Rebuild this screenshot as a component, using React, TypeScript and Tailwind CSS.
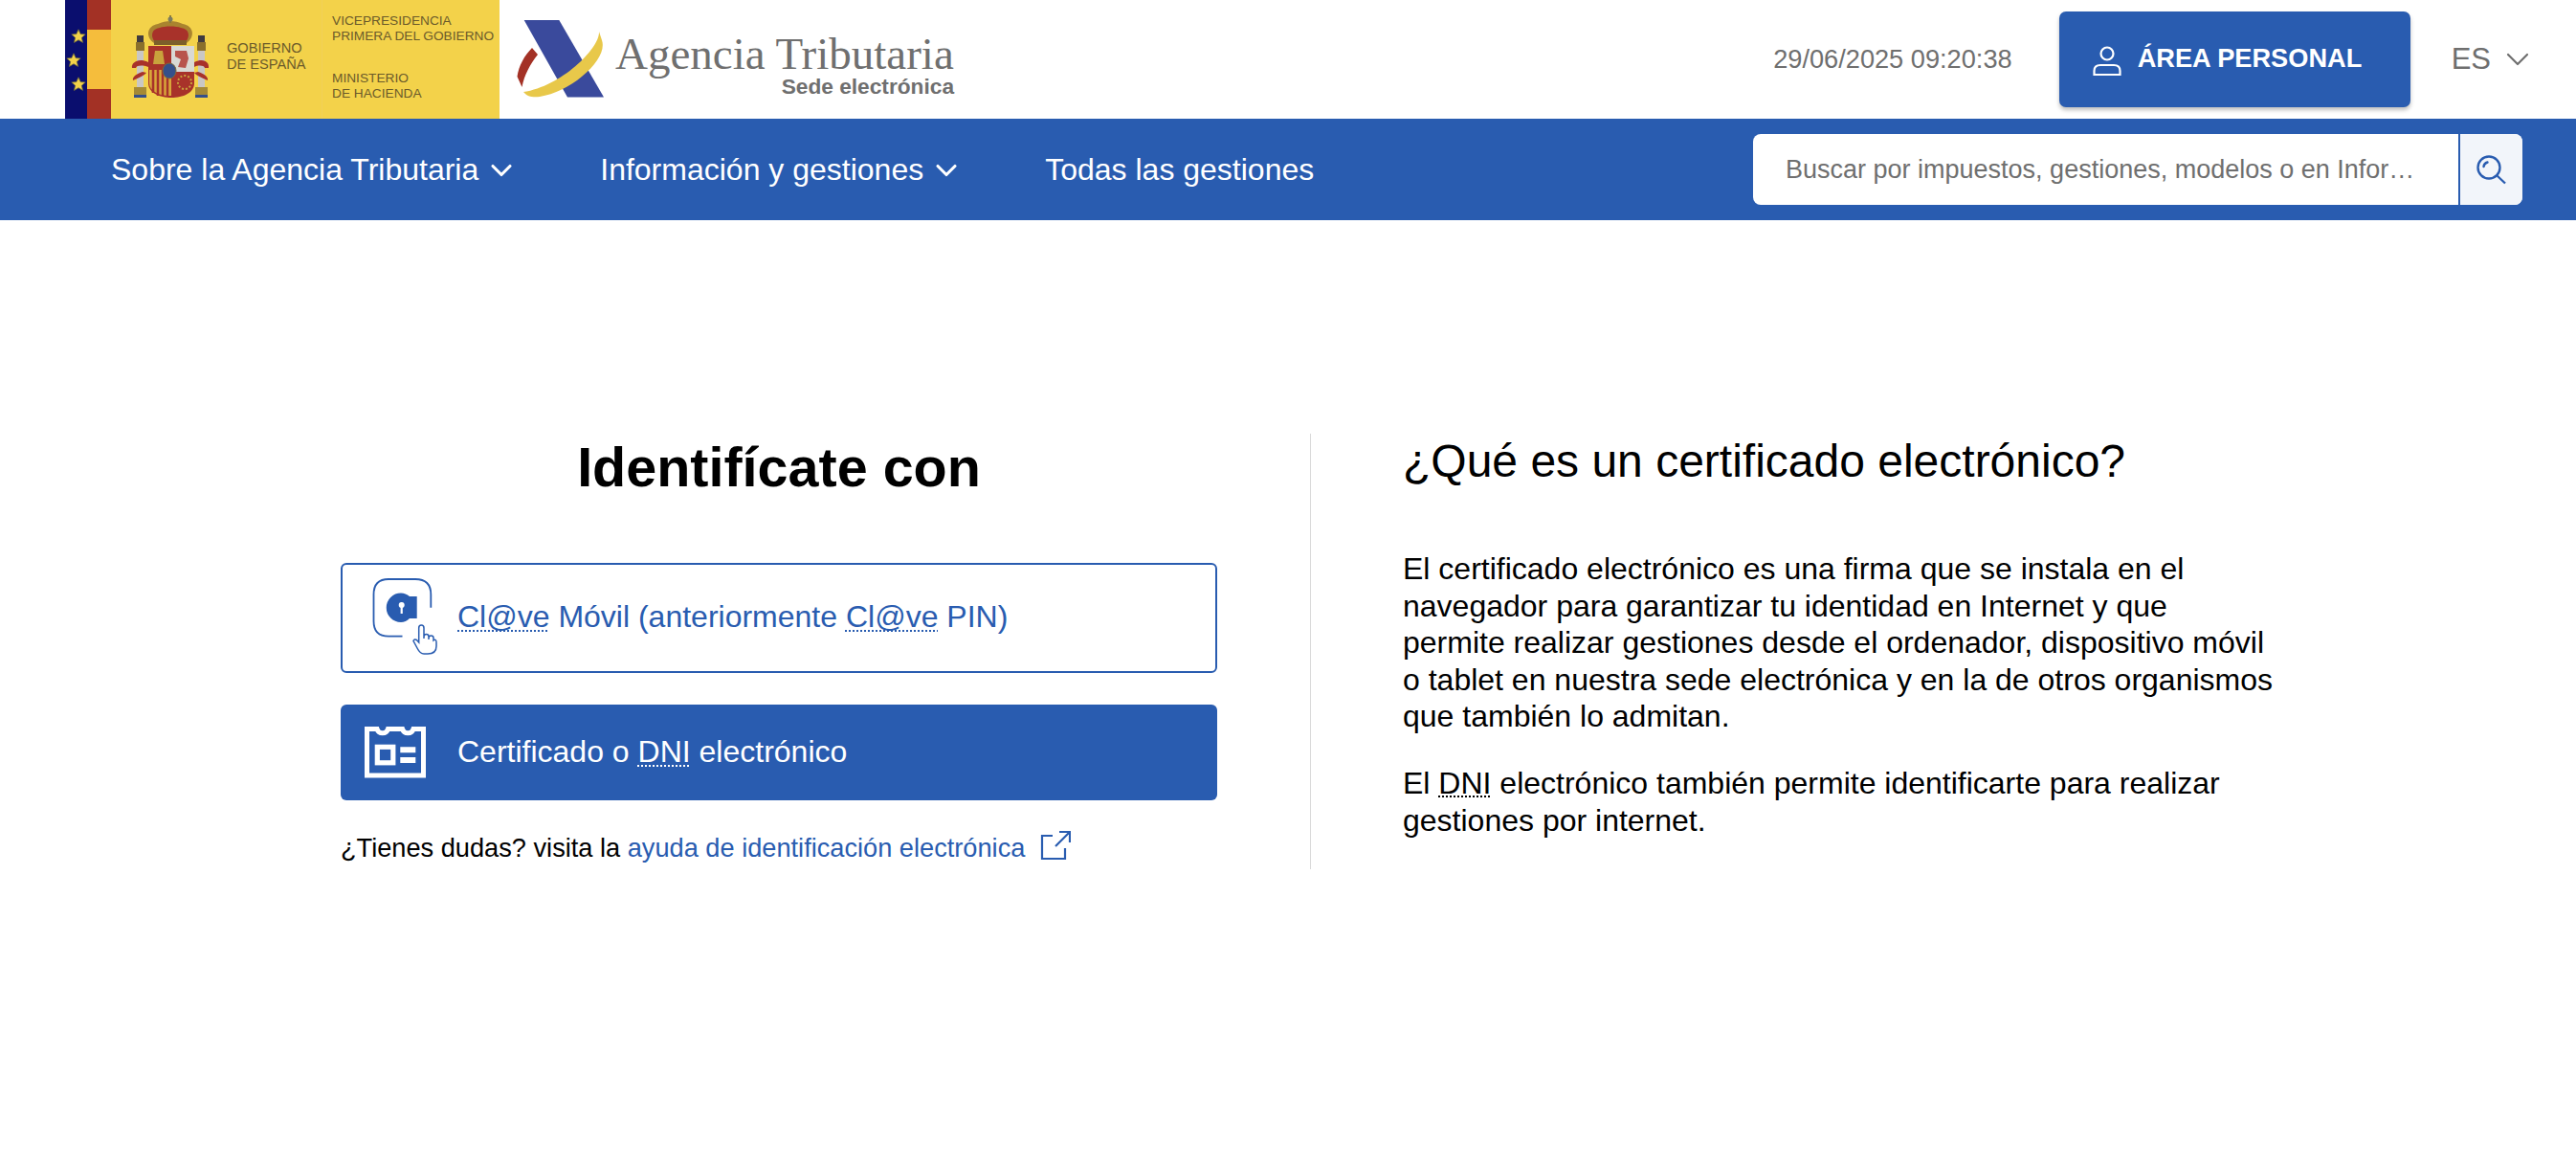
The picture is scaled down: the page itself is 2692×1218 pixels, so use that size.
import { ChevronDown } from 'lucide-react';

const Dotted = ({ children }: { children: string }) => (
  <span className="underline decoration-dotted decoration-2 underline-offset-[3px] [text-decoration-skip-ink:none]">{children}</span>
);

const Star = ({ className }: { className: string }) => (
  <svg viewBox="0 0 20 20" className={className}>
    <path d="M10 1l2.700 6 6.300.5-4.800 4.200 1.500 6.300L10 14.700 4.300 18l1.500-6.300L1 7.500l6.300-.5z" fill="#f3d24a" stroke="#6f6a3a" strokeWidth="1" />
  </svg>
);

const CoatOfArms = () => (
  <svg viewBox="0 0 82 88" className="w-[82px] h-[88px] shrink-0 blur-[0.4px]">
    {/* crown */}
    <path d="M24 30 C15 24 16 12 28 10 C32 8 37 7 41 7 C45 7 50 8 54 10 C66 12 67 24 58 30 Z" fill="#a9842f" />
    <path d="M25 29 C20 23 21 15 30 14 C35 12 47 12 52 14 C61 15 62 23 57 29 Z" fill="#a8322a" />
    <path d="M40 1 h2 v8 h-2z" fill="#8a7a3a" />
    <circle cx="41" cy="5" r="2.500" fill="#7a7a60" />
    <rect x="24" y="27" width="34" height="5" fill="#7c5f2a" />
    {/* shield */}
    <path d="M18 33 H66 V72 C66 82 54 87 42 87 C30 87 18 82 18 72 Z" fill="#a8322a" />
    <rect x="42" y="33" width="24" height="27" fill="#d9d9d4" />
    <path d="M46 38 L58 38 L60 46 L57 56 L49 55 L52 47 L46 44 Z" fill="#b8544c" />
    <path d="M25 38 L33 38 L35 52 L23 52 Z" fill="#c9a23c" />
    <path d="M19 58 H42 V85 C30 86 19 80 19 72 Z" fill="#d8a63a" />
    <path d="M23 58 v24 M28 58 v27 M33 58 v27 M38 58 v28" stroke="#a8322a" strokeWidth="2.500" />
    <circle cx="56" cy="71" r="7" fill="none" stroke="#c9a23c" strokeWidth="2" strokeDasharray="2 2" />
    <ellipse cx="40" cy="59" rx="7" ry="8" fill="#35508a" stroke="#7c6a3a" />
    {/* columns */}
    <rect x="5" y="29" width="9" height="9" fill="#8a6f2c" />
    <rect x="69" y="29" width="9" height="9" fill="#8a6f2c" />
    <path d="M6 22 h7 v7 h-7z M70 22 h7 v7 h-7z" fill="#3f3a3f" />
    <rect x="6" y="38" width="7" height="38" fill="#c9c7c4" />
    <rect x="70" y="38" width="7" height="38" fill="#c9c7c4" />
    <path d="M3 76 h13 v10 h-13z M67 76 h13 v10 h-13z" fill="#a58a35" />
    <path d="M3 84 h13 v3 h-13z M67 84 h13 v3 h-13z" fill="#35508a" />
    {/* ribbons */}
    <path d="M18 50 C8 45 0 50 1 56 L5 56 C6 53 12 53 18 55 Z M12 60 C6 62 1 65 2 69 C8 66 14 64 16 61 Z" fill="#a8322a" />
    <path d="M66 50 C76 45 82 50 81 56 L77 56 C76 53 70 53 66 55 Z M70 60 C76 62 81 65 80 69 C74 66 68 64 66 61 Z" fill="#a8322a" />
  </svg>
);

// the "A" mark from the Agencia Tributaria logo
const AeatMark = () => (
  <svg viewBox="0 0 92 82" className="w-[92px] h-[82px] shrink-0">
    <path d="M8.700 1 H45.300 L92 81.500 H54 Z" fill="#3a4a9c" />
    <path d="M17 30 L23 37 C15 47 9 58 6.500 71 L1.500 60 C3 49 9 38 17 30 Z" fill="#a33125" />
    <path d="M87 13 C88 30 48 70 8 76 C12 81 18 82 25 81 C58 76 97 42 90 22 Z" fill="#e8c84a" />
  </svg>
);

const ClaveIcon = () => (
  <svg viewBox="0 0 120 105" className="w-[120px] h-[105px] shrink-0" fill="none" stroke="#295cb0">
    <path d="M79.300 41.700 V28 Q79.300 12 63 12 H35 Q19.500 12 19.500 28 V56 Q19.500 71.700 35 71.700 H49.500" strokeWidth="1.800" />
    <path d="M48 26.500 A15.200 15.200 0 1 0 48 57 Q53 57 57 53 H64.700 V30 H57 Q53 26.500 48 26.500 Z" fill="#295cb0" stroke="none" />
    <circle cx="48.700" cy="39" r="3" fill="#fff" stroke="none" />
    <path d="M48.700 40 V48" stroke="#fff" strokeWidth="2.200" />
    <path d="M66.700 78 V63 Q66.700 60 69.300 60 Q72 60 72 63 V74 V72 Q72 69.500 74.500 69.500 Q77 69.500 77 72 V75 V73.500 Q77 71 79.500 71 Q82 71 82 73.500 V76 Q85 74 85 78 V82 Q85 90 76 90 H72 Q68 90 65 84 L61 76.500 Q62 74 64.500 75.500 L66.700 78 Z" fill="#fff" strokeWidth="1.500" />
  </svg>
);

const CertIcon = () => (
  <svg viewBox="0 0 88 80" className="w-[88px] h-[80px] shrink-0" fill="none" stroke="#fff">
    <path d="M14.500 16.500 H25 A6 6 0 0 0 36.500 16.500 H51.500 A6 6 0 0 0 63 16.500 H73.500 V65 H14.500 Z" strokeWidth="5" />
    <rect x="25.300" y="35.300" width="16.500" height="16.500" strokeWidth="5.200" />
    <path d="M49.300 38.300 H65.300 M49.300 49 H65.300" strokeWidth="6" />
  </svg>
);

const navItems = [
  { label: 'Sobre la Agencia Tributaria', chevron: true },
  { label: 'Información y gestiones', chevron: true },
  { label: 'Todas las gestiones', chevron: false },
];

export default function App() {
  return (
    <div className="min-h-[1218px] w-full bg-white font-['Liberation_Sans',Arial,sans-serif] text-black">
      {/* Top header */}
      <header className="h-[124px] flex items-center pl-[68px] pr-[41px]">
        <div className="flex h-[124px] w-[454px] shrink-0 bg-[#f3d24a]">
          <div className="w-[23px] shrink-0 bg-[#0a0e6e] flex flex-col justify-start gap-[9px] pt-[30px] relative z-10">
            <Star className="w-[16px] h-[16px] ml-[6px]" />
            <Star className="w-[16px] h-[16px] ml-[1px]" />
            <Star className="w-[16px] h-[16px] ml-[6px]" />
          </div>
          <div className="w-[25px] flex flex-col">
            <div className="h-[31px] bg-[#a33125]"></div>
            <div className="h-[62px] bg-[#f5bd3c]"></div>
            <div className="flex-1 bg-[#a33125]"></div>
          </div>
          <div className="flex items-start pt-[15px] pl-[21px] w-[221px] shrink-0 border-r border-[#f1cf58]">
            <CoatOfArms />
            <div className="ml-[18px] mt-[27px] text-[14.600px] leading-[17px] text-[#6b5a2a] whitespace-nowrap">
              <div>GOBIERNO</div>
              <div>DE ESPAÑA</div>
            </div>
          </div>
          <div className="pl-[10px] text-[13.700px] leading-[16px] text-[#6b5a2a] whitespace-nowrap pt-[14px]">
            <div>VICEPRESIDENCIA</div>
            <div>PRIMERA DEL GOBIERNO</div>
            <div className="mt-[28px]">MINISTERIO</div>
            <div>DE HACIENDA</div>
          </div>
        </div>

        <div className="flex items-start h-[124px] pt-[20px] ml-[17px]">
          <AeatMark />
          <div className="ml-[12px] w-[354px] mt-[14px] flex flex-col items-end text-[#6f6f6f] whitespace-nowrap">
            <div className="font-['Liberation_Serif',serif] text-[47px] leading-[44px] self-start">Agencia Tributaria</div>
            <div className="text-[22.700px] leading-[24px] font-bold">Sede electrónica</div>
          </div>
        </div>

        <div className="ml-auto flex items-center">
          <span className="text-[27.200px] text-[#6f6f6f] whitespace-nowrap">29/06/2025 09:20:38</span>
          <button className="ml-[49px] w-[367px] h-[100px] bg-[#295cb0] rounded-[7px] shadow-[0_3px_4px_rgba(0,0,0,0.25)] flex items-center pl-[35px] pb-[2px] text-white font-bold text-[27.200px] whitespace-nowrap">
            <svg viewBox="0 0 30 31" className="w-[30px] h-[31px] mr-[17px] mt-[4px]" fill="none" stroke="#fff" strokeWidth="2.200">
              <circle cx="15" cy="8" r="6.500" />
              <path d="M1.500 30 V26 Q1.500 20 8 20 H22 Q28.500 20 28.500 26 V30 Z" />
            </svg>
            ÁREA PERSONAL
          </button>
          <span className="ml-[43px] text-[31px] text-[#6f6f6f]">ES</span>
          <ChevronDown className="ml-[8px] w-[40px] h-[40px] text-[#6f6f6f]" strokeWidth={1.300} />
        </div>
      </header>

      {/* Blue nav */}
      <nav className="h-[106px] bg-[#295cb0] flex items-center pl-[116px] pr-[56px] text-white text-[32px]">
        <div className="flex items-center gap-[85px]">
          {navItems.map((item) => (
            <a key={item.label} className="flex items-center whitespace-nowrap">
              {item.label}
              {item.chevron && <ChevronDown className="ml-[6px] w-[36px] h-[36px] mt-[2px]" strokeWidth={2.100} />}
            </a>
          ))}
        </div>
        <div className="ml-auto flex h-[74px] w-[804px] rounded-[8px] overflow-hidden bg-white">
          <input
            readOnly
            placeholder="Buscar por impuestos, gestiones, modelos o en Información"
            className="w-[737px] shrink-0 pl-[34px] pr-[41px] text-[27px] text-ellipsis outline-none placeholder:text-[#6f6f6f]"
          />
          <div className="flex-1 flex items-center justify-center bg-[#f2f5fa] border-l-2 border-[#295cb0]">
            <svg viewBox="0 0 31 31" className="w-[31px] h-[31px]" fill="none" stroke="#295cb0" strokeWidth="2.400">
              <circle cx="13" cy="13" r="11.500" />
              <path d="M21.500 21.500 L30 29.500" />
              <path d="M7.500 12 Q8 8.500 11.500 7.500" strokeLinecap="round" />
            </svg>
          </div>
        </div>
      </nav>

      {/* Main content */}
      <main className="flex pl-[356px] pt-[223px]">
        <section className="w-[916px] shrink-0">
          <h1 className="text-[57.500px] leading-[70px] font-bold text-center">Identifícate con</h1>
          <a className="mt-[65px] h-[115px] flex items-center pl-[13px] border-2 border-[#295cb0] rounded-[6px] text-[32px] text-[#295cb0] whitespace-nowrap">
            <ClaveIcon />
            <span className="-ml-[13px] pb-[3px]">
              <Dotted>Cl@ve</Dotted> Móvil (anteriormente <Dotted>Cl@ve</Dotted> PIN)
            </span>
          </a>
          <a className="mt-[33px] h-[100px] flex items-center pl-[13px] pb-[2px] bg-[#295cb0] rounded-[6px] text-[32px] text-white whitespace-nowrap">
            <CertIcon />
            <span className="ml-[21px]">
              Certificado o <Dotted>DNI</Dotted> electrónico
            </span>
          </a>
          <p className="mt-[32px] flex items-center text-[27.200px] leading-[36px] whitespace-nowrap">
            <span>¿Tienes dudas? visita la&nbsp;</span>
            <span className="text-[#295cb0]">ayuda de identificación electrónica</span>
            <svg viewBox="0 0 32 32" className="ml-[16px] w-[32px] h-[32px] -mt-[6px]" fill="none" stroke="#295cb0" strokeWidth="2.200">
              <path d="M13 6 H2 V30 H26 V19" />
              <path d="M16 17 L30 3 M20 2 H31 V13" />
            </svg>
          </p>
        </section>

        <div className="ml-[97px] h-[455px] w-px bg-[#d9d9d9]"></div>

        <section className="ml-[96px] w-[912px]">
          <h2 className="text-[48px] leading-[58px]">¿Qué es un certificado electrónico?</h2>
          <p className="mt-[64px] text-[32px] leading-[38.600px]">
            El certificado electrónico es una firma que se instala en el navegador para garantizar tu identidad en Internet y que permite realizar gestiones desde el ordenador, dispositivo móvil o tablet en nuestra sede electrónica y en la de otros organismos que también lo admitan.
          </p>
          <p className="mt-[31px] text-[32px] leading-[38.600px]">
            El <Dotted>DNI</Dotted> electrónico también permite identificarte para realizar gestiones por internet.
          </p>
        </section>
      </main>
    </div>
  );
}
